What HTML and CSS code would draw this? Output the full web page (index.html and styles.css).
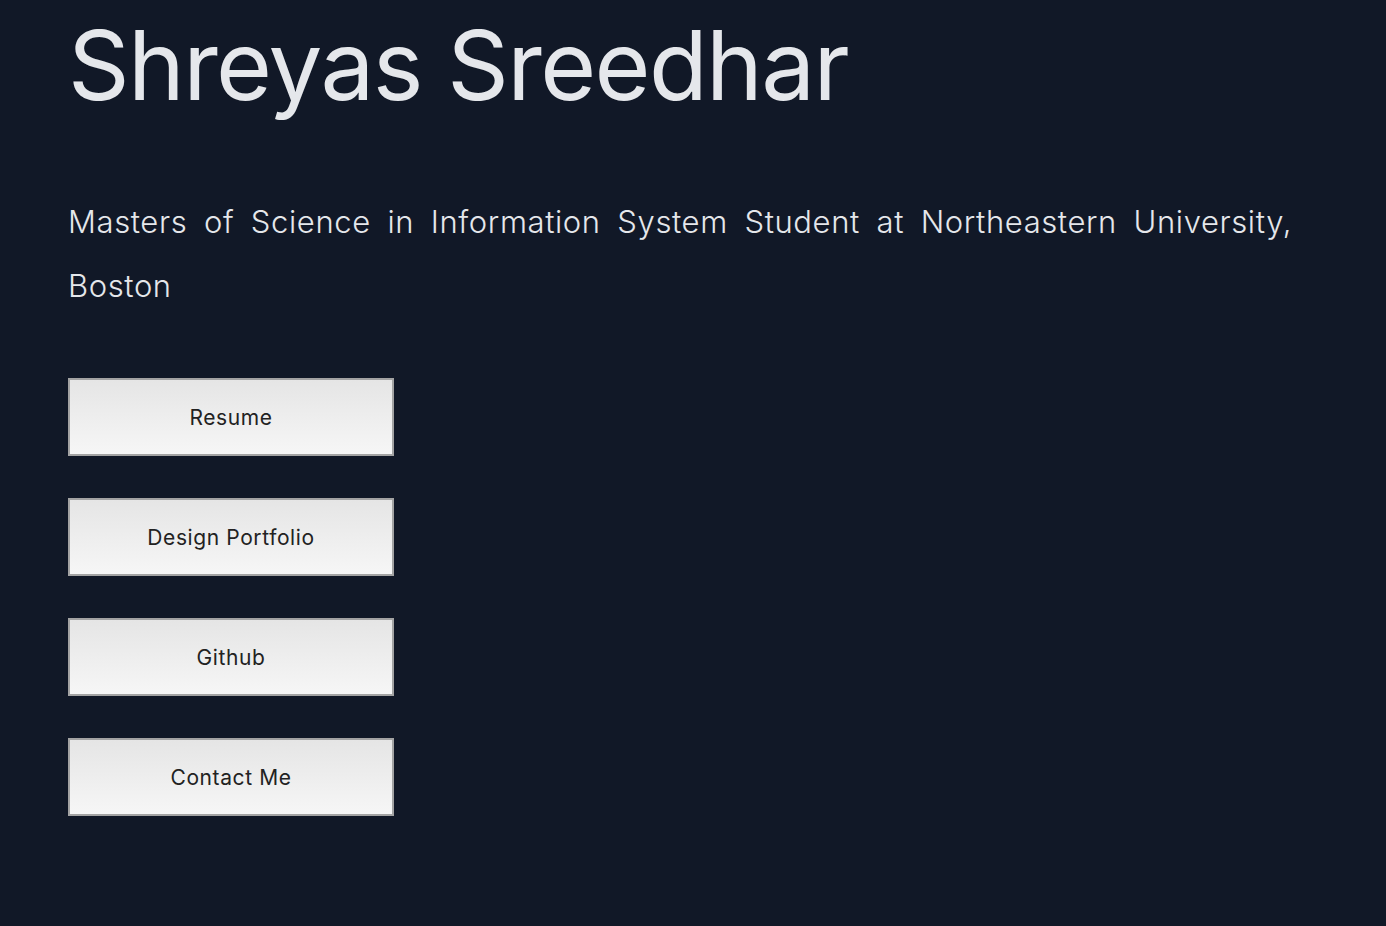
FILE: index.html
```html
<!DOCTYPE html>
<html>
<head>
<meta charset="utf-8">
<link rel="stylesheet" href="styles.css">
</head>
<body>
<main class="page">
  <h1 class="title">Shreyas Sreedhar</h1>
  <p class="intro">Masters of Science in Information System Student at Northeastern University, Boston</p>
  <nav class="links">
    <button class="btn">Resume</button>
    <button class="btn">Design Portfolio</button>
    <button class="btn">Github</button>
    <button class="btn">Contact Me</button>
  </nav>
</main>
</body>
</html>
```

FILE: styles.css
```css
html, body {
  margin: 0;
  padding: 0;
  background: #111827;
  height: 100%;
}
body {
  font-family: Inter, "Liberation Sans", sans-serif;
  color: #e5e7eb;
}
.page {
  padding: 17px 94px 0 68px;
}
.title {
  margin: 0;
  font-size: 96px;
  line-height: 1;
  font-weight: 400;
  letter-spacing: -1.6px;
}
.intro {
  margin: 77px 0 0 0;
  font-size: 31px;
  line-height: 64px;
  font-weight: 300;
  text-align: justify;
  letter-spacing: 0.6px;
}
.links {
  margin-top: 60px;
  display: flex;
  flex-direction: column;
  align-items: flex-start;
  gap: 42px;
}
.btn {
  box-sizing: border-box;
  width: 326px;
  height: 78px;
  border: 2px solid #a3a3a3;
  background: linear-gradient(#e5e5e5, #f6f6f6);
  font-family: Inter, "Liberation Sans", sans-serif;
  font-size: 21px;
  color: #222;
  padding: 0;
  letter-spacing: 0.6px;
}
```
